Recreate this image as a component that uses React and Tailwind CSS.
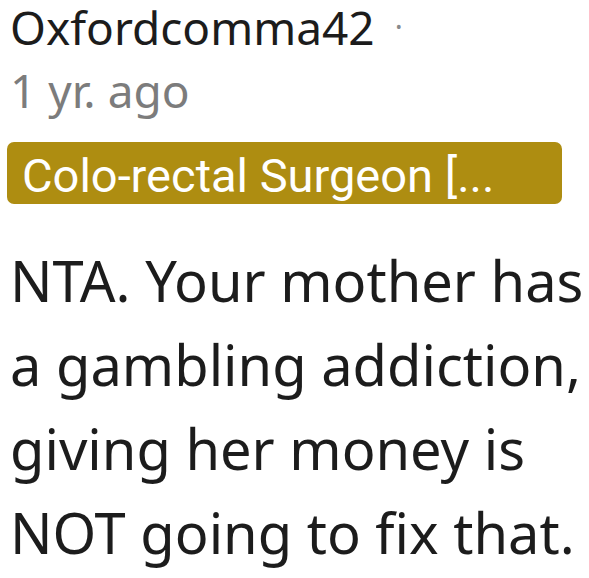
import React from 'react';

function App() {
    return (
        <div className="w-[589px] min-h-[578px] bg-white px-[10px] pt-[4px]" style={{ fontFamily: '"Noto Sans", sans-serif' }}>
            <div className="flex items-center gap-5 text-[46px] leading-none text-[#1c1c1c]">
                <span>Oxfordcomma42</span>
                <span className="text-[#878a8c] text-[30px]">·</span>
            </div>
            <div className="mt-[17px] text-[46px] leading-none text-[#7c7c7c]">1 yr. ago</div>
            <div
                className="mt-[29px] -ml-[3px] w-[555px] h-[62px] rounded-[7px] bg-[#ae8d11] flex items-center pt-[7px] px-[15px] text-white text-[47px]"
                style={{ fontFamily: 'Roboto, sans-serif' }}
            >
                Colo-rectal Surgeon [...
            </div>
            <p className="mt-[34px] text-[56px] leading-[84px] text-[#1c1c1c] whitespace-nowrap">
                NTA. Your mother has<br />
                a gambling addiction,<br />
                giving her money is<br />
                NOT going to fix that.
            </p>
        </div>
    );
}

export default App;
